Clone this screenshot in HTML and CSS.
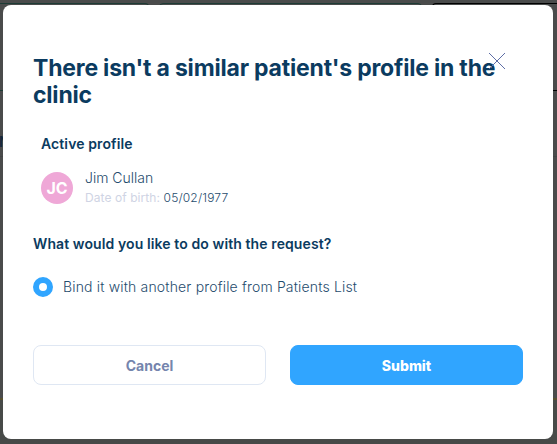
FILE: index.html
```html
<!DOCTYPE html>
<html lang="en">
<head>
<meta charset="UTF-8">
<meta name="viewport" content="width=device-width, initial-scale=1.0">
<title>Similar patient's profile</title>
<link rel="stylesheet" href="styles.css">
</head>
<body>
<div class="page">
  <div class="cards">
    <div class="card"></div>
    <div class="card"></div>
    <div class="card card-dark"></div>
  </div>
  <div class="row-name">N</div>
  <div class="page-footer"></div>
</div>

<div class="modal">
  <button class="close" aria-label="Close">
    <svg width="16" height="16" viewBox="0 0 16 16">
      <path d="M0 0L16 16M16 0L0 16" stroke="#5e6ea6" stroke-width="1" fill="none"/>
    </svg>
  </button>
  <h1 class="title">There isn't a similar patient's profile in the clinic</h1>
  <div class="profile">
    <h2 class="subtitle">Active profile</h2>
    <div class="patient">
      <div class="avatar">JC</div>
      <div class="patient-info">
        <div class="patient-name">Jim Cullan</div>
        <div class="patient-birth"><span class="label">Date of birth:</span> 05/02/1977</div>
      </div>
    </div>
  </div>
  <h2 class="subtitle">What would you like to do with the request?</h2>
  <label class="option">
    <span class="radio"></span>
    <span class="option-text">Bind it with another profile from Patients List</span>
  </label>
  <div class="buttons">
    <button class="btn btn-cancel">Cancel</button>
    <button class="btn btn-submit">Submit</button>
  </div>
</div>
</body>
</html>
```

FILE: styles.css
```css
* {
  box-sizing: border-box;
}
body {
  margin: 0;
  height: 444px;
  overflow: hidden;
  font-family: Inter, sans-serif;
  color: #0b3b60;
  background-color: #4a4b4b;
}
.page {
  height: 444px;
  padding-top: 3px;
}
.cards {
  display: grid;
  grid-template-columns: 149px 263px 1fr;
  gap: 10px;
  height: 88px;
}
.card {
  border: 1px solid #1d3b35;
  border-radius: 4px;
}
.card:first-child {
  border-left: none;
  border-radius: 0 4px 4px 0;
}
.card-dark {
  border-color: #000;
  border-right: none;
  border-radius: 4px 0 0 4px;
}
.row-name {
  height: 66px;
  margin-left: -1px;
  padding-top: 43px;
  border-bottom: 1px solid #434445;
  font-size: 14px;
  font-weight: 600;
  line-height: 16px;
  color: #14273a;
}
.page-footer {
  margin-top: 241px;
  height: 46px;
  border-top: 2px solid #57502f;
  background-color: #474a48;
}
.modal {
  position: absolute;
  top: 5px;
  left: 3px;
  width: 550px;
  height: 434px;
  padding: 50px 30px 0;
  border-radius: 8px;
  background-color: #fff;
}
.close {
  position: absolute;
  top: 48px;
  right: 48px;
  width: 16px;
  height: 16px;
  padding: 0;
  border: none;
  background: none;
  cursor: pointer;
}
.close svg {
  display: block;
}
.title {
  margin: 0;
  font-size: 23px;
  font-weight: 700;
  line-height: 27px;
  letter-spacing: -0.2px;
}
.profile {
  padding: 25px 8px 0;
  margin-bottom: 26px;
}
.subtitle {
  margin: 0;
  font-size: 14px;
  font-weight: 600;
  line-height: 20px;
  letter-spacing: 0.1px;
}
.patient {
  display: flex;
  align-items: center;
  gap: 12px;
  margin-top: 14px;
}
.avatar {
  width: 32px;
  height: 32px;
  border-radius: 50%;
  font-size: 16px;
  font-weight: 700;
  line-height: 32px;
  text-align: center;
  color: #fff;
  background-color: #efa8d7;
}
.patient-name {
  font-size: 14px;
  font-weight: 300;
  line-height: 20px;
  color: #1f4c6d;
}
.patient-birth {
  font-size: 12px;
  font-weight: 300;
  line-height: 20px;
  letter-spacing: 0.17px;
  color: #1f4c6d;
}
.label {
  font-weight: 400;
  letter-spacing: 0.07px;
  color: #cfd4e4;
}
.option {
  display: flex;
  align-items: center;
  gap: 10px;
  margin-top: 23px;
}
.radio {
  width: 20px;
  height: 20px;
  border: 6px solid #30a5ff;
  border-radius: 50%;
}
.option-text {
  font-size: 14px;
  font-weight: 300;
  line-height: 20px;
  letter-spacing: 0.17px;
  color: #1f4c6d;
}
.buttons {
  display: flex;
  gap: 24px;
  margin-top: 48px;
}
.btn {
  flex: 1;
  height: 40px;
  padding: 0;
  border: 1px solid #30a5ff;
  border-radius: 8px;
  font-family: inherit;
  font-size: 14px;
  font-weight: 700;
  cursor: pointer;
}
.btn-cancel {
  border-color: #dfe7f3;
  color: #7585ad;
  background-color: #fff;
}
.btn-submit {
  font-weight: 800;
  color: #fff;
  background-color: #30a5ff;
}
```
